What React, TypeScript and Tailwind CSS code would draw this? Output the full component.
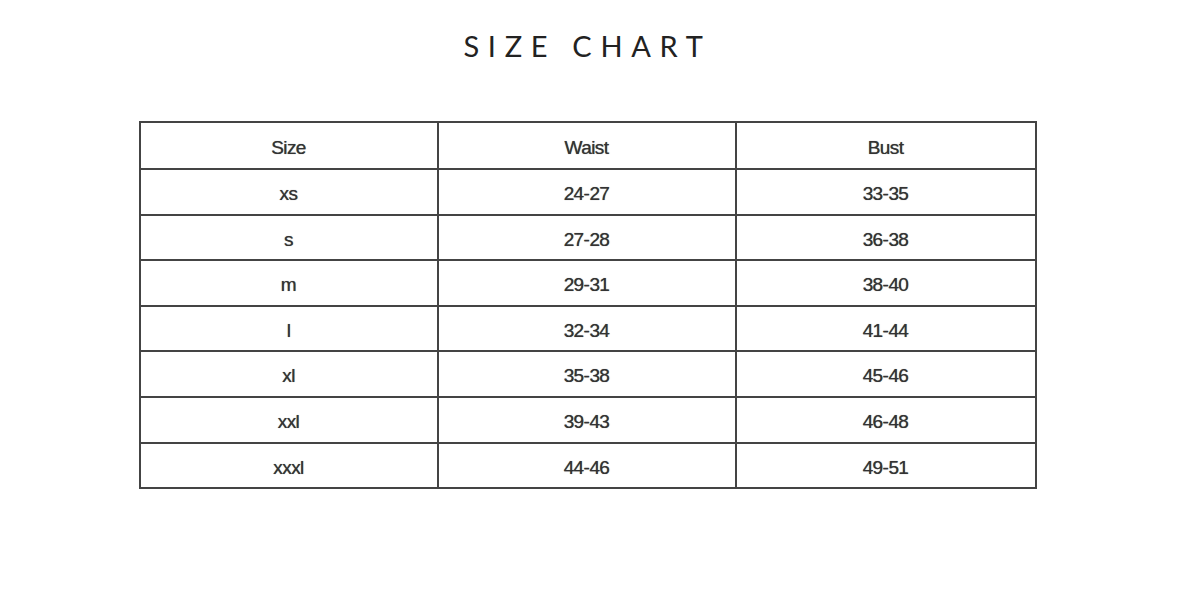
import React from "react";

const rows: [string, string, string][] = [
  ["xs", "24-27", "33-35"],
  ["s", "27-28", "36-38"],
  ["m", "29-31", "38-40"],
  ["l", "32-34", "41-44"],
  ["xl", "35-38", "45-46"],
  ["xxl", "39-43", "46-48"],
  ["xxxl", "44-46", "49-51"],
];

const cell = "flex items-center justify-center pt-[5px]";

export default function App() {
  return (
    <div className="w-[1200px] h-[589px] bg-white pr-[25px]">
      <div className="flex flex-col items-center">
        <h1
          className="mt-[30px] text-[29px] leading-[32px] tracking-[0.3em] text-[#222] font-normal"
          style={{ fontFamily: "Lato, 'Open Sans', sans-serif" }}
        >
          SIZE CHART
        </h1>
        <div
          className="mt-[59px] w-[898px] border-2 border-[#444] text-[19px] tracking-[-0.03em] text-[#333] [text-shadow:0_0_0.7px_#555]"
          style={{ fontFamily: "'Liberation Sans', Arial, sans-serif" }}
        >
          <div className="grid grid-cols-3 h-[45px]">
            <div className={`${cell} border-r-2 border-[#444]`}>Size</div>
            <div className={`${cell} border-r-2 border-[#444]`}>Waist</div>
            <div className={cell}>Bust</div>
          </div>
          {rows.map((r) => (
            <div key={r[0]} className="grid grid-cols-3 h-[45.6px] border-t-2 border-[#444]">
              <div className={`${cell} border-r-2 border-[#444]`}>{r[0]}</div>
              <div className={`${cell} border-r-2 border-[#444]`}>{r[1]}</div>
              <div className={cell}>{r[2]}</div>
            </div>
          ))}
        </div>
      </div>
    </div>
  );
}
